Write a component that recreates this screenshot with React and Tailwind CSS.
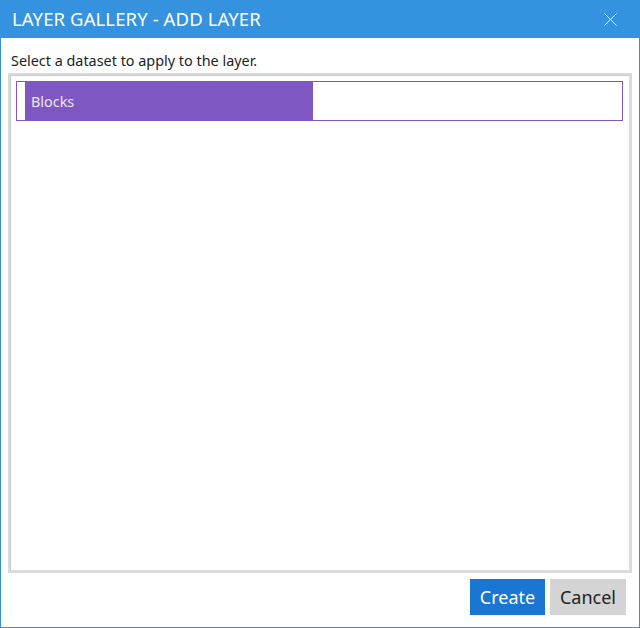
import { useState } from "react";

const datasets = [{ id: "blocks", name: "Blocks" }];

function CloseIcon() {
  return (
    <svg width="13" height="13" viewBox="0 0 13 13" className="block">
      <path d="M0.5 0.5 L12.5 12.5 M12.5 0.5 L0.5 12.5" stroke="#ffffff" strokeWidth="1" fill="none" />
    </svg>
  );
}

function DatasetRow({ name, selected, onSelect }) {
  return (
    <div
      onClick={onSelect}
      className={`h-[40px] border flex pl-2 ${selected ? "border-[#7e57c2]" : "border-transparent"}`}
    >
      <div className="w-[288px] bg-[#7e57c2] flex items-center pl-[6px] pt-[2px] text-[14.4px] text-[#ece6f6]">
        {name}
      </div>
    </div>
  );
}

export default function App() {
  const [selected, setSelected] = useState("blocks");

  return (
    <div
      className="w-[640px] h-[628px] bg-white border-x border-b border-[#3592de] flex flex-col"
      style={{ fontFamily: '"Noto Sans", "Open Sans", sans-serif' }}
    >
      <div className="h-[38px] -mx-px bg-[#3592de] flex items-center justify-between pl-[12px] pr-[23px] shrink-0">
        <span className="text-[18.5px] text-white tracking-[0.1px] leading-none">LAYER GALLERY - ADD LAYER</span>
        <button type="button" aria-label="Close">
          <CloseIcon />
        </button>
      </div>

      <div className="flex-1 flex flex-col px-[7px] pt-[13px] pb-[12px]">
        <p className="text-[14.4px] text-[#1e1e1e] leading-[20px] pl-[3px] mb-[2px]">
          Select a dataset to apply to the layer.
        </p>

        <div className="flex-1 border-2 border-[#dadada] p-0 flex">
          <div className="flex-1 border border-[#c9c9c9] border-r-[#dedede] border-b-[#dedede] bg-white pt-[5px] pl-[5px] pr-[6px]">
            {datasets.map((d) => (
              <DatasetRow
                key={d.id}
                name={d.name}
                selected={selected === d.id}
                onSelect={() => setSelected(d.id)}
              />
            ))}
          </div>
        </div>

        <div className="flex justify-end gap-[5px] pt-[6px] pr-[6px]">
          <button
            type="button"
            className="w-[75px] h-[36px] bg-[#1976d2] text-white text-[18px] leading-none"
          >
            Create
          </button>
          <button
            type="button"
            className="w-[76px] h-[36px] bg-[#d4d4d4] text-[#222] text-[18px] leading-none"
          >
            Cancel
          </button>
        </div>
      </div>
    </div>
  );
}
